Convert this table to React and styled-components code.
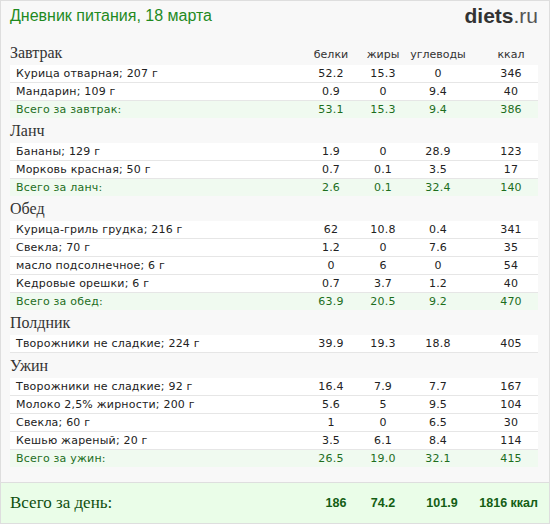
import React from "react";
import styled, { createGlobalStyle } from "styled-components";

const GlobalStyle = createGlobalStyle`
  html, body {
    margin: 0;
    padding: 0;
    background: #fff;
  }
  * {
    box-sizing: border-box;
  }
`;

const meals = [
  {
    title: "Завтрак",
    labels: true,
    items: [
      ["Курица отварная; 207 г", "52.2", "15.3", "0", "346"],
      ["Мандарин; 109 г", "0.9", "0", "9.4", "40"],
    ],
    total: ["Всего за завтрак:", "53.1", "15.3", "9.4", "386"],
  },
  {
    title: "Ланч",
    items: [
      ["Бананы; 129 г", "1.9", "0", "28.9", "123"],
      ["Морковь красная; 50 г", "0.7", "0.1", "3.5", "17"],
    ],
    total: ["Всего за ланч:", "2.6", "0.1", "32.4", "140"],
  },
  {
    title: "Обед",
    items: [
      ["Курица-гриль грудка; 216 г", "62", "10.8", "0.4", "341"],
      ["Свекла; 70 г", "1.2", "0", "7.6", "35"],
      ["масло подсолнечное; 6 г", "0", "6", "0", "54"],
      ["Кедровые орешки; 6 г", "0.7", "3.7", "1.2", "40"],
    ],
    total: ["Всего за обед:", "63.9", "20.5", "9.2", "470"],
  },
  {
    title: "Полдник",
    items: [["Творожники не сладкие; 224 г", "39.9", "19.3", "18.8", "405"]],
  },
  {
    title: "Ужин",
    items: [
      ["Творожники не сладкие; 92 г", "16.4", "7.9", "7.7", "167"],
      ["Молоко 2,5% жирности; 200 г", "5.6", "5", "9.5", "104"],
      ["Свекла; 60 г", "1", "0", "6.5", "30"],
      ["Кешью жареный; 20 г", "3.5", "6.1", "8.4", "114"],
    ],
    total: ["Всего за ужин:", "26.5", "19.0", "32.1", "415"],
  },
];

const Page = styled.div`
  width: 550px;
  border: 1px solid #dedede;
  background: #f8f8f8;
  font-family: "DejaVu Sans", Verdana, sans-serif;
`;

const Header = styled.div`
  display: flex;
  justify-content: space-between;
  align-items: center;
  height: 39px;
  padding: 0 11px 9px 9px;
`;

const Title = styled.h1`
  margin: 0;
  font-family: "Liberation Sans", Tahoma, sans-serif;
  font-weight: normal;
  font-size: 16px;
  color: #1f8a1f;
`;

const Logo = styled.div`
  font-family: "Liberation Sans", Arial, sans-serif;
  font-size: 21px;
  color: #555;

  b {
    color: #333;
  }
`;

const Content = styled.div`
  padding: 0 11px 15px 9px;
`;

const Grid = styled.div`
  display: grid;
  grid-template-columns: 1fr 52px 52px 58px 71px;
  align-items: center;

  & > span:not(:first-child) {
    text-align: center;
  }
  & > span:nth-child(5) {
    padding-left: 17px;
  }
`;

const Heading = styled(Grid)`
  height: 25px;
  align-items: end;
  padding-bottom: 2px;
`;

const MealName = styled.span`
  font-family: "Liberation Serif", Georgia, serif;
  font-size: 16px;
  line-height: 20px;
  color: #333;
`;

const Label = styled.span`
  font-size: 11px;
  line-height: 16px;
  color: #333;
`;

const Row = styled(Grid)`
  height: ${(p) => (p.$total ? "17px" : "18px")};
  padding-left: 6px;
  background: ${(p) => (p.$total ? "#f0faf0" : "#fff")};
  border-bottom: ${(p) => (p.$total ? "none" : "1px solid #e6e6e6")};
  font-size: 11px;
  letter-spacing: 0.2px;
  color: ${(p) => (p.$total ? "#1d6e1d" : "#222")};
`;

const DayTotal = styled.div`
  display: grid;
  grid-template-columns: 1fr 46px 48px 70px 61px;
  align-items: center;
  height: 41px;
  padding: 0 11px 0 9px;
  border-top: 1px solid #dedede;
  background: #eafde8;
  color: #145e14;
  font-family: "Liberation Sans", Arial, sans-serif;
  font-weight: bold;
  font-size: 12.5px;
  white-space: nowrap;

  & > span:not(:first-child) {
    text-align: center;
  }
  & > span:last-child {
    text-align: right;
  }
`;

const DayLabel = styled.span`
  font-family: "Liberation Serif", Georgia, serif;
  font-weight: normal;
  font-size: 17px;
  color: #0f4f0f;
`;

function Meal({ meal }) {
  return (
    <>
      <Heading>
        <MealName>{meal.title}</MealName>
        {meal.labels &&
          ["белки", "жиры", "углеводы", "ккал"].map((l) => (
            <Label key={l}>{l}</Label>
          ))}
      </Heading>
      {meal.items.map((item, i) => (
        <Row key={i}>
          {item.map((v, j) => (
            <span key={j}>{v}</span>
          ))}
        </Row>
      ))}
      {meal.total && (
        <Row $total>
          {meal.total.map((v, j) => (
            <span key={j}>{v}</span>
          ))}
        </Row>
      )}
    </>
  );
}

export default function App() {
  return (
    <>
      <GlobalStyle />
      <Page>
        <Header>
          <Title>Дневник питания, 18 марта</Title>
          <Logo>
            <b>diets</b>.ru
          </Logo>
        </Header>
        <Content>
          {meals.map((m) => (
            <Meal key={m.title} meal={m} />
          ))}
        </Content>
        <DayTotal>
          <DayLabel>Всего за день:</DayLabel>
          <span>186</span>
          <span>74.2</span>
          <span>101.9</span>
          <span>1816 ккал</span>
        </DayTotal>
      </Page>
    </>
  );
}
